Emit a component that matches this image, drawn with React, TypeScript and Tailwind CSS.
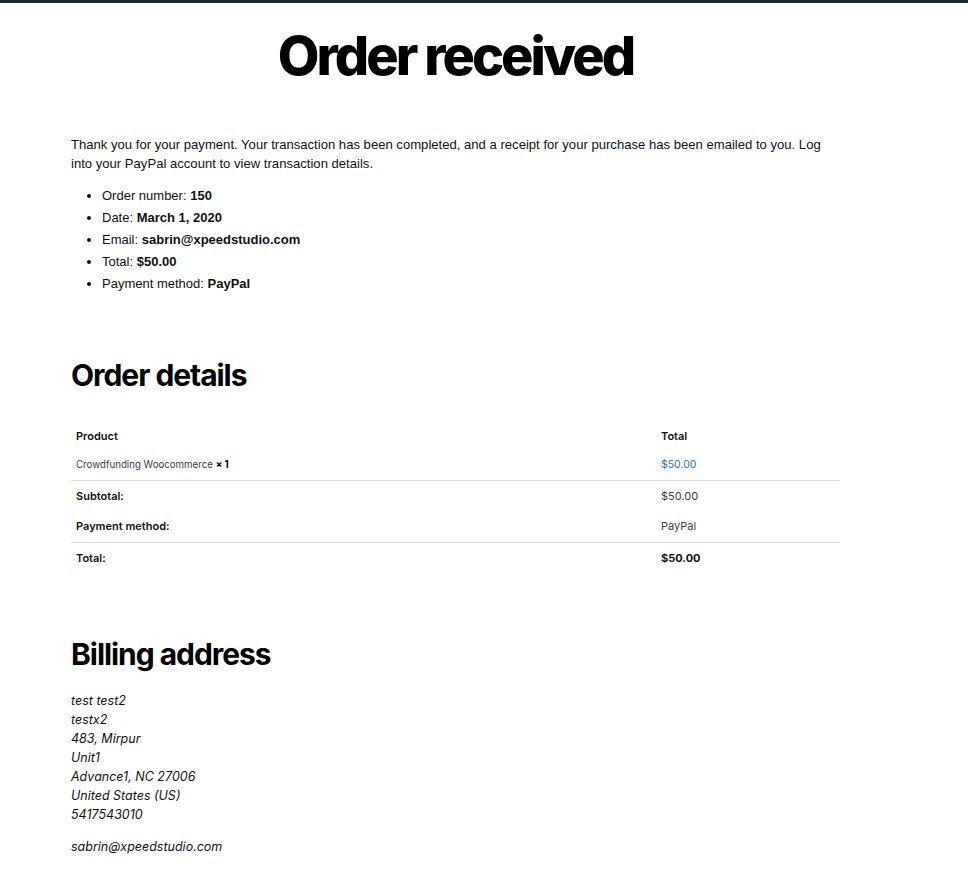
import React from 'react';

type Row = { label: string; value: string; strong?: boolean; border?: boolean };

const totals: Row[] = [
  { label: 'Subtotal:', value: '$50.00', border: true },
  { label: 'Payment method:', value: 'PayPal' },
  { label: 'Total:', value: '$50.00', strong: true, border: true },
];

const overview = [
  { label: 'Order number:', value: '150' },
  { label: 'Date:', value: 'March 1, 2020' },
  { label: 'Email:', value: 'sabrin@xpeedstudio.com' },
  { label: 'Total:', value: '$50.00' },
  { label: 'Payment method:', value: 'PayPal' },
];

const address = [
  'test test2',
  'testx2',
  '483, Mirpur',
  'Unit1',
  'Advance1, NC 27006',
  'United States (US)',
  '5417543010',
];

export default function App() {
  return (
    <div className="min-h-[871px] bg-white text-black">
      <div className="h-[3px] bg-[#23282d]" />
      <div className="mx-[71px] w-[769px]">
        <h1 className="mt-[23px] text-center font-['Inter',sans-serif] text-[54px] font-extrabold leading-[60px] tracking-[-0.055em]">
          Order received
        </h1>

        <p className="mt-[49px] font-['Liberation_Sans',Arial,sans-serif] text-[13.1px] leading-[19px] text-[#111]">
          Thank you for your payment. Your transaction has been completed, and a receipt for your purchase has been emailed to you. Log into your PayPal account to view transaction details.
        </p>

        <ul className="mt-[12px] list-disc pl-[31px] font-['Liberation_Sans',Arial,sans-serif] text-[13px] leading-[22px] text-[#111]">
          {overview.map((o) => (
            <li key={o.label}>
              {o.label} <strong className="font-bold">{o.value}</strong>
            </li>
          ))}
        </ul>

        <h2 className="mt-[60px] font-['Inter',sans-serif] text-[30px] font-bold leading-[40px] tracking-[-0.035em]">
          Order details
        </h2>

        <table className="mt-[26px] w-full border-collapse font-['Inter',sans-serif] text-[11px] text-[#111]">
          <thead>
            <tr className="h-[30px]">
              <th className="w-[585px] px-[5px] text-left font-semibold">Product</th>
              <th className="px-[5px] text-left font-semibold">Total</th>
            </tr>
          </thead>
          <tbody>
            <tr className="h-[29px]">
              <td className="px-[5px] text-[9.7px] text-[#3c3c3c]">
                Crowdfunding Woocommerce <strong className="font-bold text-black">× 1</strong>
              </td>
              <td className="px-[5px] text-[10.5px] text-[#2a6fb5]">$50.00</td>
            </tr>
          </tbody>
          <tfoot>
            {totals.map((r) => (
              <tr key={r.label} className={r.border ? 'h-[31px] border-t border-[#dcdcdc]' : 'h-[31px]'}>
                <th className="px-[5px] text-left font-semibold">{r.label}</th>
                <td className={r.strong ? 'px-[5px] font-bold' : 'px-[5px] text-[#3c3c3c]'}>{r.value}</td>
              </tr>
            ))}
          </tfoot>
        </table>

        <h2 className="mt-[61px] font-['Inter',sans-serif] text-[30px] font-bold leading-[40px] tracking-[-0.035em]">
          Billing address
        </h2>

        <address className="mt-[17px] font-['Inter',sans-serif] text-[12.5px] italic leading-[19px] text-[#111]">
          {address.map((line) => (
            <div key={line}>{line}</div>
          ))}
          <div className="mt-[13px]">sabrin@xpeedstudio.com</div>
        </address>
      </div>
    </div>
  );
}
